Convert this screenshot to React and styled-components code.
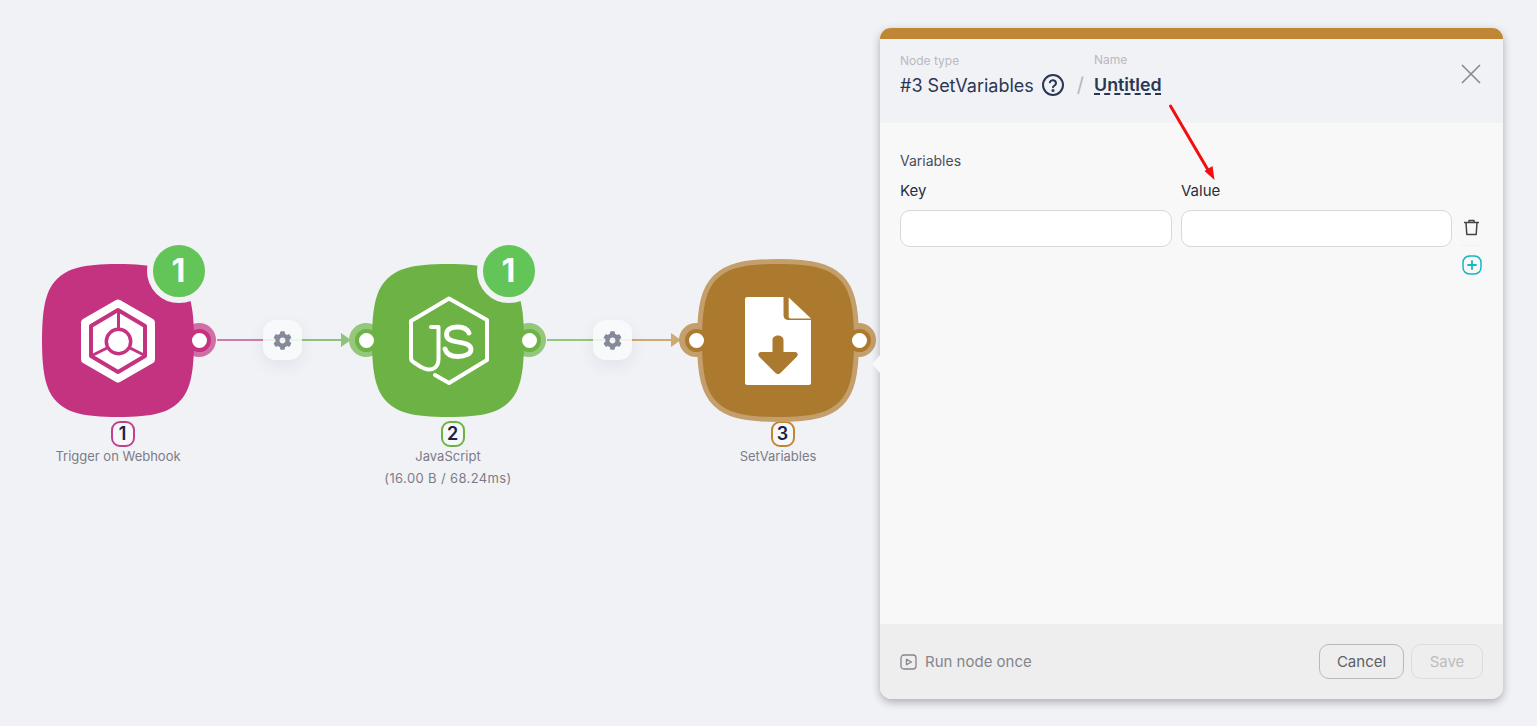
import React from "react";
import styled, { createGlobalStyle } from "styled-components";
import { FaCog } from "react-icons/fa";

const Global = createGlobalStyle`
  html, body { margin: 0; padding: 0; height: 100%; overflow: hidden; background: #f1f2f6; }
  body { font-family: Inter, "Noto Sans", sans-serif; }
  * { box-sizing: border-box; }
`;

const Canvas = styled.div`
  position: relative;
  width: 1537px;
  height: 726px;
  background: #f1f2f6;
  overflow: hidden;
`;

/* ---------- flow nodes: free canvas items ---------- */
const NodeBox = styled.div`
  position: absolute;
  left: ${(p) => p.$x - 100}px;
  top: 240px;
  width: 200px;
  height: 250px;
  display: flex;
  flex-direction: column;
  align-items: center;
`;
const Blob = styled.svg`
  position: absolute;
  left: 24px;
  top: 24px;
  width: 152px;
  height: 153px;
  overflow: visible;
  z-index: 1;
`;
const Halo = styled.span`
  position: absolute;
  left: ${(p) => p.$dx + 100 - 17}px;
  top: 83px;
  width: 34px;
  height: 34px;
  border-radius: 50%;
  background: ${(p) => p.$color};
  z-index: 0;
`;
const Dot = styled.span`
  position: absolute;
  left: ${(p) => p.$dx + 100 - 11.5}px;
  top: 88.5px;
  width: 23px;
  height: 23px;
  border-radius: 50%;
  background: #fff;
  border: 4.5px solid ${(p) => p.$color};
  z-index: 2;
`;
const Badge = styled.div`
  position: absolute;
  left: 128.5px;
  top: -1px;
  width: 64px;
  height: 64px;
  border-radius: 50%;
  border: 6px solid #f1f2f6;
  background: #63c557;
  color: #fff;
  font-size: 32px;
  font-weight: 700;
  line-height: 52px;
  text-align: center;
  z-index: 3;
`;
const Logo = styled.svg`
  position: absolute;
  left: ${(p) => p.$l}px;
  top: ${(p) => p.$t}px;
  z-index: 2;
`;
const NodeText = styled.div`
  position: absolute;
  top: 181px;
  left: 0;
  width: 200px;
  display: flex;
  flex-direction: column;
  align-items: center;
`;
const Tag = styled.div`
  width: 24px;
  height: 26px;
  margin-left: 9px;
  border: 2px solid ${(p) => p.$color};
  border-radius: 9px;
  background: #f6f7f9;
  color: #1c2340;
  font-size: 18px;
  font-weight: 600;
  line-height: 22px;
  text-align: center;
`;
const NodeLabel = styled.div`
  margin-top: -2px;
  margin-bottom: 2px;
  font-size: 13px;
  line-height: 22px;
  color: #7c7c88;
  white-space: nowrap;
  letter-spacing: ${(p) => (p.$wide ? 0.37 : 0)}px;
`;

const Edge = styled.div`
  position: absolute;
  left: ${(p) => p.$x}px;
  top: 339px;
  width: 124px;
  height: 2px;
  background: linear-gradient(90deg, ${(p) => p.$from}, ${(p) => p.$from} 40%, ${(p) => p.$to} 60%, ${(p) => p.$to});
  &::after {
    content: "";
    position: absolute;
    left: 124px;
    top: -6px;
    border-left: 10px solid ${(p) => p.$to};
    border-top: 7px solid transparent;
    border-bottom: 7px solid transparent;
  }
`;
const GearButton = styled.div`
  position: absolute;
  left: ${(p) => p.$x}px;
  top: 320px;
  width: 39px;
  height: 40px;
  border-radius: 13px;
  background: rgba(248, 249, 251, 0.88);
  box-shadow: 0 6px 16px rgba(60, 65, 90, 0.08);
  display: flex;
  align-items: center;
  justify-content: center;
  color: #858a9b;
  font-size: 19px;
  z-index: 4;
`;

/* ---------- side panel (overlay) ---------- */
const Panel = styled.aside`
  position: absolute;
  left: 880px;
  top: 28px;
  width: 623px;
  height: 671px;
  border-radius: 12px;
  background: #f8f8f9;
  box-shadow: 0 3px 8px rgba(40, 40, 50, 0.35);
  display: flex;
  flex-direction: column;
  z-index: 5;
  &::before {
    content: "";
    position: absolute;
    left: -8px;
    top: 327px;
    border-right: 8px solid #f8f8f9;
    border-top: 9px solid transparent;
    border-bottom: 9px solid transparent;
  }
`;
const Accent = styled.div`
  height: 11px;
  flex: none;
  background: #bf8735;
  border-radius: 12px 12px 0 0;
`;
const Header = styled.header`
  height: 84px;
  flex: none;
  background: #f1f2f6;
  padding: 14px 22px 0 20px;
  display: flex;
  align-items: flex-start;
`;
const HeaderCol = styled.div`
  display: flex;
  flex-direction: column;
`;
const Caption = styled.div`
  font-size: 12px;
  line-height: 15px;
  color: #b9b9bf;
  transform: translateY(${(p) => p.$lift || 0}px);
`;
const TypeRow = styled.div`
  display: flex;
  align-items: center;
  margin-top: 4px;
  height: 26px;
  font-size: 18px;
  color: #2b3653;
  gap: 7px;
`;
const Slash = styled.div`
  font-size: 20px;
  color: #b5b6bc;
  margin: 20px 10px 0 12px;
  line-height: 24px;
`;
const NameValue = styled.div`
  margin-top: 5px;
  font-size: 17.8px;
  line-height: 24px;
  font-weight: 600;
  color: #2b3653;
  text-decoration: underline dashed #2b3653 1.5px;
  text-underline-offset: 2px;
`;
const CloseBtn = styled.button`
  margin-left: auto;
  margin-top: 11px;
  width: 20px;
  height: 20px;
  padding: 0;
  border: 0;
  background: none;
  color: #8a8a8e;
  display: flex;
`;
const Body = styled.main`
  flex: 1;
  padding: 29px 20px 0;
  display: flex;
  flex-direction: column;
`;
const SectionTitle = styled.div`
  font-size: 14px;
  line-height: 18px;
  color: #4a4e5a;
`;
const KVHead = styled.div`
  display: grid;
  grid-template-columns: 272px 271px;
  column-gap: 9px;
  margin-top: 12px;
  font-size: 15px;
  line-height: 18px;
  color: #2a2e3c;
  font-weight: 400;
`;
const KVRow = styled.div`
  display: grid;
  grid-template-columns: 272px 271px 40px;
  column-gap: 9px;
  margin-top: 10px;
`;
const Field = styled.input`
  height: 37px;
  border: 1px solid #d8d8da;
  border-radius: 10px;
  background: #fff;
  outline: none;
`;
const TrashCell = styled.div`
  width: 22px;
  height: 36px;
  margin-left: -1px;
  display: flex;
  align-items: center;
  justify-content: center;
  color: #444;
  border-bottom: 1px solid #f1f1f3;
`;
const AddRow = styled.div`
  display: flex;
  justify-content: flex-end;
  padding-right: 1px;
  margin-top: 8px;
  color: #17b6c6;
`;
const Footer = styled.footer`
  height: 75px;
  flex: none;
  background: #eeeeee;
  border-radius: 0 0 12px 12px;
  padding: 0 20px;
  display: flex;
  align-items: center;
  gap: 7px;
`;
const RunLabel = styled.span`
  display: flex;
  align-items: center;
  gap: 7px;
  font-size: 15px;
  color: #85858c;
  margin-right: auto;
`;
const Button = styled.button`
  height: 35px;
  width: ${(p) => (p.$disabled ? 72 : 85)}px;
  padding: 0;
  border-radius: 10px;
  border: 1px solid ${(p) => (p.$disabled ? "#dcdcdc" : "#b9b9bb")};
  background: transparent;
  font: 15px Inter, sans-serif;
  color: ${(p) => (p.$disabled ? "#bdbdc0" : "#606066")};
`;
const Annotation = styled.svg`
  position: absolute;
  left: 0;
  top: 0;
  width: 1537px;
  height: 726px;
  pointer-events: none;
  z-index: 6;
`;

const BLOB = "M76 0C40 0 25 5 15 15C5 25 0 40 0 76.5C0 113 5 128 15 138C25 148 40 153 76 153C112 153 127 148 137 138C147 128 152 113 152 76.5C152 40 147 25 137 15C127 5 112 0 76 0Z";

const WebhookIcon = () => (
  <Logo $l={62} $t={59} width="76" height="84" viewBox="0 0 76 84">
    <path d="M38 4.500L71 23.500V60.500L38 79.500L5 60.500V23.500Z" fill="#fff" stroke="#fff" strokeWidth="8" strokeLinejoin="round" />
    <path d="M38 11L65 27V57L38 73L11 57V27Z" fill="#fff" stroke="#c3337f" strokeWidth="4" strokeLinejoin="round" />
    <path d="M38.500 12V30M13 56L27 49M64 56L50 49" stroke="#c3337f" strokeWidth="3" fill="none" />
    <circle cx="38.500" cy="42.500" r="12.200" fill="#fff" stroke="#c3337f" strokeWidth="3.500" />
  </Logo>
);

const JsIcon = () => (
  <Logo $l={59} $t={55} width="84" height="92" viewBox="0 0 84 92">
    <g fill="none" stroke="#fff" strokeWidth="4" strokeLinejoin="round" strokeLinecap="round">
      <path d="M28 80L42 88L80 65V25L42 3.500L4 26V63C4 65 5 66.500 7 67.500L14 72C16 73 18 74 21 74.500C26 75 31.500 72 31.500 64V32H24" />
      <path d="M62 38C60 33.500 56 32 50.500 32C44 32 39.500 34.500 39.500 39.500C39.500 44.500 44 46 50.500 47C58 48 64 49.500 64 54.500C64 59 58 61.500 51 61.500C44 61.500 39.500 59 38 54" strokeWidth="4.800" />
    </g>
  </Logo>
);

const FileIcon = () => (
  <Logo $l={67} $t={57} width="66" height="88" viewBox="0 0 66 88">
    <path d="M2 0H38.500V18C38.500 21 40.500 23 44 23H66V86C66 87 65 88 64 88H2C1 88 0 87 0 86V2C0 1 1 0 2 0Z" fill="#fff" />
    <path d="M43.700 0.500L66 21.500H45.500C44.500 21.500 43.700 20.500 43.700 19.500Z" fill="#fff" />
    <path d="M27.500 43C27.500 37 38.500 37 38.500 43V55H50C52.500 55 53.500 57.500 52 59.500L35.500 76C34 77.500 32 77.500 30.500 76L14 59.500C12.500 57.500 13.500 55 16 55H27.500Z" fill="#ab7a2f" />
  </Logo>
);

const nodes = [
  { x: 118, color: "#c3337f", halo: "#d26ea6", ports: [81], tag: "#c3408a", n: 1, lines: ["Trigger on Webhook"], badge: true, Icon: WebhookIcon },
  { x: 448, color: "#6cb245", halo: "#93c77a", ports: [-82, 81], tag: "#6cb245", n: 2, lines: ["JavaScript", "(16.00 B / 68.24ms)"], badge: true, Icon: JsIcon },
  { x: 778, color: "#ab7a2f", halo: "#c49e6b", ports: [-82, 81], tag: "#bf8735", n: 3, lines: ["SetVariables"], ring: true, Icon: FileIcon },
];

function FlowNode({ node }) {
  const { x, color, halo, ports, tag, n, lines, badge, ring, Icon } = node;
  return (
    <NodeBox $x={x}>
      {ports.map((dx) => (
        <React.Fragment key={dx}>
          <Halo $dx={dx} $color={halo} />
          <Dot $dx={dx} $color={color} />
        </React.Fragment>
      ))}
      <Blob viewBox="0 0 152 153">
        <path d={BLOB} fill={color} stroke={ring ? halo : "none"} strokeWidth={ring ? 10 : 0} paintOrder="stroke" />
      </Blob>
      <Icon />
      {badge && <Badge>1</Badge>}
      <NodeText>
        <Tag $color={tag}>{n}</Tag>
        {lines.map((l, i) => (
          <NodeLabel key={l} $wide={i === 1}>{l}</NodeLabel>
        ))}
      </NodeText>
    </NodeBox>
  );
}

const HelpIcon = () => (
  <svg width="24" height="24" viewBox="0 0 24 24" fill="none" stroke="#2b3653" strokeWidth="2" strokeLinecap="round">
    <circle cx="12" cy="12" r="10" />
    <path d="M8.800 9.300a3.200 3.200 0 0 1 6.200 1c0 2.200-3 2.500-3 4" />
    <circle cx="12" cy="17.500" r=".6" fill="#2b3653" />
  </svg>
);

export default function App() {
  return (
    <Canvas>
      <Global />
      <Edge $x={217} $from="#cf7cab" $to="#8fc27c" />
      <Edge $x={547} $from="#93c77a" $to="#cfa96f" />
      <GearButton $x={263}><FaCog /></GearButton>
      <GearButton $x={593}><FaCog /></GearButton>
      {nodes.map((n) => (
        <FlowNode key={n.n} node={n} />
      ))}
      <Panel>
        <Accent />
        <Header>
          <HeaderCol>
            <Caption>Node type</Caption>
            <TypeRow>#3 SetVariables <HelpIcon /></TypeRow>
          </HeaderCol>
          <Slash>/</Slash>
          <HeaderCol>
            <Caption $lift={-1}>Name</Caption>
            <NameValue>Untitled</NameValue>
          </HeaderCol>
          <CloseBtn aria-label="Close">
            <svg width="20" height="20" viewBox="0 0 20 20" stroke="currentColor" strokeWidth="1.600" fill="none">
              <path d="M1 1L19 19M19 1L1 19" />
            </svg>
          </CloseBtn>
        </Header>
        <Body>
          <SectionTitle>Variables</SectionTitle>
          <KVHead>
            <div>Key</div>
            <div>Value</div>
          </KVHead>
          <KVRow>
            <Field />
            <Field />
            <TrashCell>
              <svg width="17" height="17" viewBox="0 0 17 17" fill="none" stroke="currentColor" strokeWidth="1.500" strokeLinejoin="round">
                <path d="M1 3.500H16M6 3.500V1.500H11V3.500M3 3.500L3.800 15.500H13.200L14 3.500" />
              </svg>
            </TrashCell>
          </KVRow>
          <AddRow>
            <svg width="20" height="20" viewBox="0 0 20 20" fill="none" stroke="currentColor" strokeWidth="1.500" strokeLinecap="round">
              <rect x="1" y="1" width="18" height="18" rx="6.500" />
              <path d="M10 6V14M6 10H14" strokeWidth="1.800" />
            </svg>
          </AddRow>
        </Body>
        <Footer>
          <RunLabel>
            <svg width="18" height="18" viewBox="0 0 18 18" fill="none" stroke="#85858c" strokeWidth="1.300" strokeLinejoin="round">
              <rect x="1" y="2" width="15" height="14" rx="3" />
              <path d="M6.500 6.200L11.500 9L6.500 11.800Z" />
            </svg>
            Run node once
          </RunLabel>
          <Button>Cancel</Button>
          <Button $disabled>Save</Button>
        </Footer>
      </Panel>
      <Annotation viewBox="0 0 1537 726">
        <path d="M1170.500 106L1208 170" stroke="#f10f0f" strokeWidth="3" strokeLinecap="round" fill="none" />
        <path d="M1214.500 180L1204.500 171L1212.500 166Z" fill="#f10f0f" />
      </Annotation>
    </Canvas>
  );
}
